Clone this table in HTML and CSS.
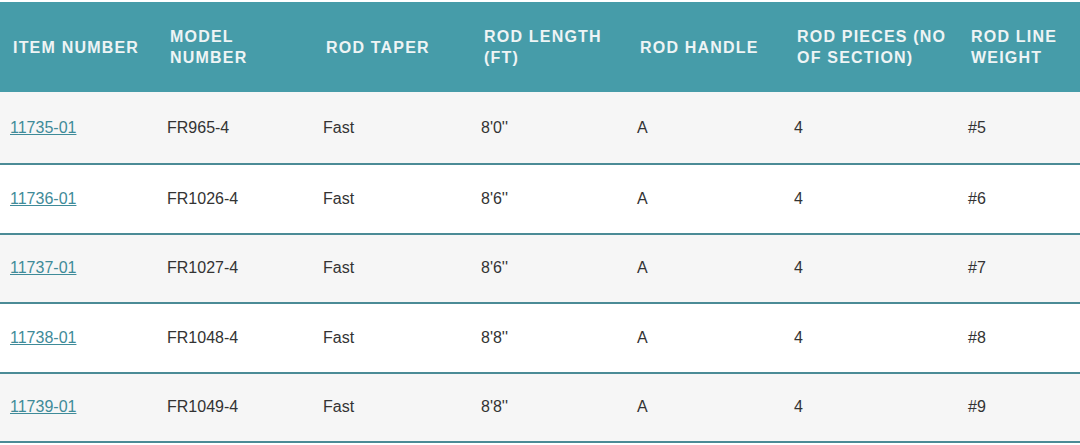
FILE: index.html
```html
<!DOCTYPE html>
<html>
<head>
<meta charset="utf-8">
<link rel="stylesheet" href="styles.css">
</head>
<body>
<table class="spec">
  <colgroup>
    <col class="c1"><col class="c2"><col class="c3"><col class="c4"><col class="c5"><col class="c6"><col class="c7">
  </colgroup>
  <thead>
    <tr>
      <th>ITEM NUMBER</th>
      <th>MODEL NUMBER</th>
      <th>ROD TAPER</th>
      <th>ROD LENGTH (FT)</th>
      <th>ROD HANDLE</th>
      <th>ROD PIECES (NO OF SECTION)</th>
      <th>ROD LINE WEIGHT</th>
    </tr>
  </thead>
  <tbody>
    <tr class="odd first"><td><a href="#">11735-01</a></td><td>FR965-4</td><td>Fast</td><td>8'0''</td><td>A</td><td>4</td><td>#5</td></tr>
    <tr><td><a href="#">11736-01</a></td><td>FR1026-4</td><td>Fast</td><td>8'6''</td><td>A</td><td>4</td><td>#6</td></tr>
    <tr class="odd"><td><a href="#">11737-01</a></td><td>FR1027-4</td><td>Fast</td><td>8'6''</td><td>A</td><td>4</td><td>#7</td></tr>
    <tr><td><a href="#">11738-01</a></td><td>FR1048-4</td><td>Fast</td><td>8'8''</td><td>A</td><td>4</td><td>#8</td></tr>
    <tr class="odd"><td><a href="#">11739-01</a></td><td>FR1049-4</td><td>Fast</td><td>8'8''</td><td>A</td><td>4</td><td>#9</td></tr>
  </tbody>
</table>
</body>
</html>
```
FILE: styles.css
```css
html, body {
  margin: 0;
  padding: 0;
  background: #ffffff;
}
body {
  padding-top: 2px;
  font-family: "Liberation Sans", Arial, sans-serif;
}
.spec {
  width: 1080px;
  border-collapse: collapse;
  table-layout: fixed;
}
.c1 { width: 157px; }
.c2 { width: 156px; }
.c3 { width: 158px; }
.c4 { width: 156px; }
.c5 { width: 157px; }
.c6 { width: 174px; }
.c7 { width: 122px; }
.spec th {
  background: #469ca9;
  color: #eef4f5;
  font-size: 16px;
  font-weight: bold;
  letter-spacing: 1.2px;
  line-height: 21px;
  text-align: left;
  vertical-align: middle;
  height: 90px;
  padding: 0 6px 0 13px;
  box-sizing: border-box;
}
.spec td {
  height: 67.5px;
  padding: 0 10px;
  font-size: 16px;
  color: #333333;
  vertical-align: middle;
  border-bottom: 2px solid #4b8b96;
  background: #ffffff;
}
.spec tr.first td {
  height: 70px;
  padding-top: 1px;
}
.spec tr.odd td {
  background: #f6f6f6;
}
.spec a {
  color: #3f8b99;
  text-decoration: underline;
}
```
